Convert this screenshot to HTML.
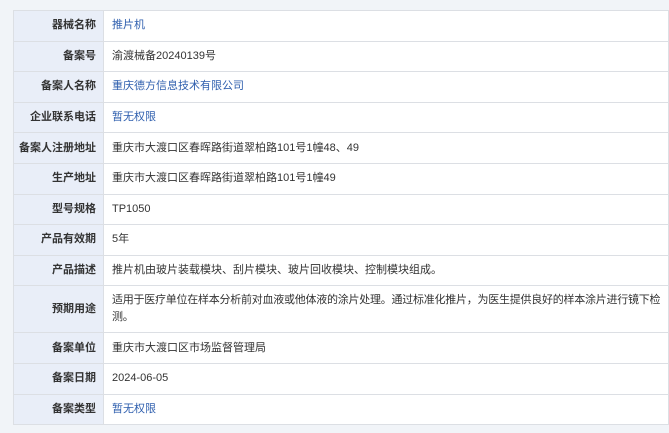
<!DOCTYPE html><html><head><meta charset="utf-8"><style>
body{margin:0;background:#f1f4f8;width:669px;height:433px;overflow:hidden;font-family:"Liberation Sans","Noto Sans CJK SC",sans-serif;font-size:11px;color:#333}
table{position:absolute;left:13px;top:10px;width:656px;border-collapse:collapse;background:#fff}
td{border:1px solid #dcdfe4;padding:0 22px 0 8px;height:29.6px;line-height:17px}
td.l{width:82px;padding:0 7px 0 0;background:#e9eef8;text-align:right;font-weight:bold;color:#333;white-space:nowrap}
td.w{padding-right:2px;letter-spacing:-0.25px}
a{color:#2f5fae;text-decoration:none}
</style></head><body><table>
<tr><td class="l">器械名称</td><td><a>推片机</a></td></tr>
<tr><td class="l">备案号</td><td>渝渡械备20240139号</td></tr>
<tr><td class="l">备案人名称</td><td><a>重庆德方信息技术有限公司</a></td></tr>
<tr><td class="l">企业联系电话</td><td><a>暂无权限</a></td></tr>
<tr><td class="l">备案人注册地址</td><td>重庆市大渡口区春晖路街道翠柏路101号1幢48、49</td></tr>
<tr><td class="l">生产地址</td><td>重庆市大渡口区春晖路街道翠柏路101号1幢49</td></tr>
<tr><td class="l">型号规格</td><td>TP1050</td></tr>
<tr><td class="l">产品有效期</td><td>5年</td></tr>
<tr><td class="l">产品描述</td><td>推片机由玻片装载模块、刮片模块、玻片回收模块、控制模块组成。</td></tr>
<tr><td class="l" style="height:46px">预期用途</td><td class="w">适用于医疗单位在样本分析前对血液或他体液的涂片处理。通过标准化推片，为医生提供良好的样本涂片进行镜下检<br>测。</td></tr>
<tr><td class="l">备案单位</td><td>重庆市大渡口区市场监督管理局</td></tr>
<tr><td class="l">备案日期</td><td>2024-06-05</td></tr>
<tr><td class="l">备案类型</td><td><a>暂无权限</a></td></tr>
</table></body></html>
